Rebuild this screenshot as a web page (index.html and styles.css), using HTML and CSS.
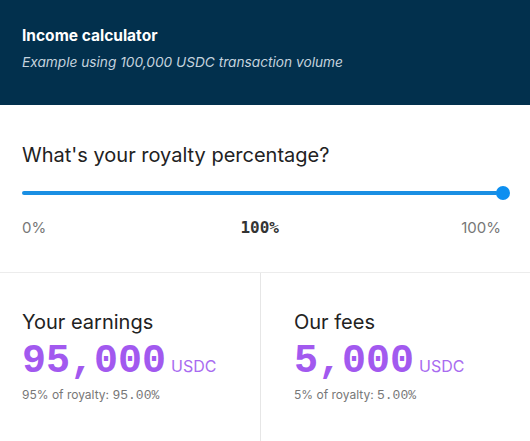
FILE: index.html
```html
<!DOCTYPE html>
<html>
<head>
<meta charset="utf-8">
<link rel="stylesheet" href="styles.css">
</head>
<body>
<div class="card">
  <header class="head">
    <h1 class="title">Income calculator</h1>
    <p class="sub">Example using 100,000 USDC transaction volume</p>
  </header>
  <section class="picker">
    <h2 class="question">What's your royalty percentage?</h2>
    <div class="slider">
      <div class="fill"></div>
      <div class="thumb"></div>
    </div>
    <div class="scale">
      <span class="lo">0%</span>
      <span class="cur">100%</span>
      <span class="hi">100%</span>
    </div>
  </section>
  <section class="results">
    <div class="col">
      <h3 class="label">Your earnings</h3>
      <div class="amount"><span class="num">95,000</span><span class="unit">USDC</span></div>
      <p class="note">95% of royalty: <span class="mono">95.00%</span></p>
    </div>
    <div class="col right">
      <h3 class="label">Our fees</h3>
      <div class="amount"><span class="num">5,000</span><span class="unit">USDC</span></div>
      <p class="note">5% of royalty: <span class="mono">5.00%</span></p>
    </div>
  </section>
</div>
</body>
</html>
```
FILE: styles.css
```css
* { box-sizing: border-box; margin: 0; padding: 0; }
html, body { width: 530px; height: 441px; background: #fff; overflow: hidden; }
body { font-family: Inter, "Noto Sans", sans-serif; color: #1f2328; }
.card { display: flex; flex-direction: column; height: 441px; }
.head {
  background: #02304d;
  height: 105px;
  padding: 26px 22px 0;
}
.title { font-size: 15.5px; font-weight: 700; color: #fff; line-height: 20px; }
.sub { font-size: 13.7px; font-style: italic; color: #c5d3de; line-height: 18px; margin-top: 7px; }
.picker { padding: 38px 22px 0; height: 168px; border-bottom: 1px solid #ececec; }
.question { font-size: 20px; font-weight: 400; color: #222; line-height: 24px; }
.slider { display: flex; align-items: center; margin-top: 19px; height: 14px; }
.fill { flex: 1; height: 4px; background: #1a8fe3; border-radius: 2px; }
.thumb { width: 14px; height: 14px; border-radius: 50%; background: #0d8ff0; margin-left: -2px; margin-right: -2px; }
.scale { display: flex; justify-content: space-between; align-items: center; margin-top: 18px; padding-right: 7px; font-size: 15px; color: #777; line-height: 20px; }
.cur { font-family: "DejaVu Sans Mono", monospace; font-weight: 700; font-size: 16px; color: #333; margin-left: 12px; }
.results { display: flex; flex: 1; }
.col { flex: 0 0 261px; padding: 37px 22px 0; border-right: 1px solid #e6e6e6; }
.col.right { flex: 1; border-right: none; padding-left: 33px; }
.label { font-size: 20px; font-weight: 400; color: #222; line-height: 24px; }
.amount { display: flex; align-items: baseline; margin-top: 6px; }
.num { font-family: "Liberation Mono", monospace; font-weight: 700; font-size: 40px; line-height: 44px; color: #a259ef; }
.unit { font-size: 16px; color: #a86bf0; margin-left: 5px; }
.note { font-size: 12px; color: #777; line-height: 16px; margin-top: 3px; }
.mono { font-family: "Liberation Mono", monospace; font-size: 13px; }
```
